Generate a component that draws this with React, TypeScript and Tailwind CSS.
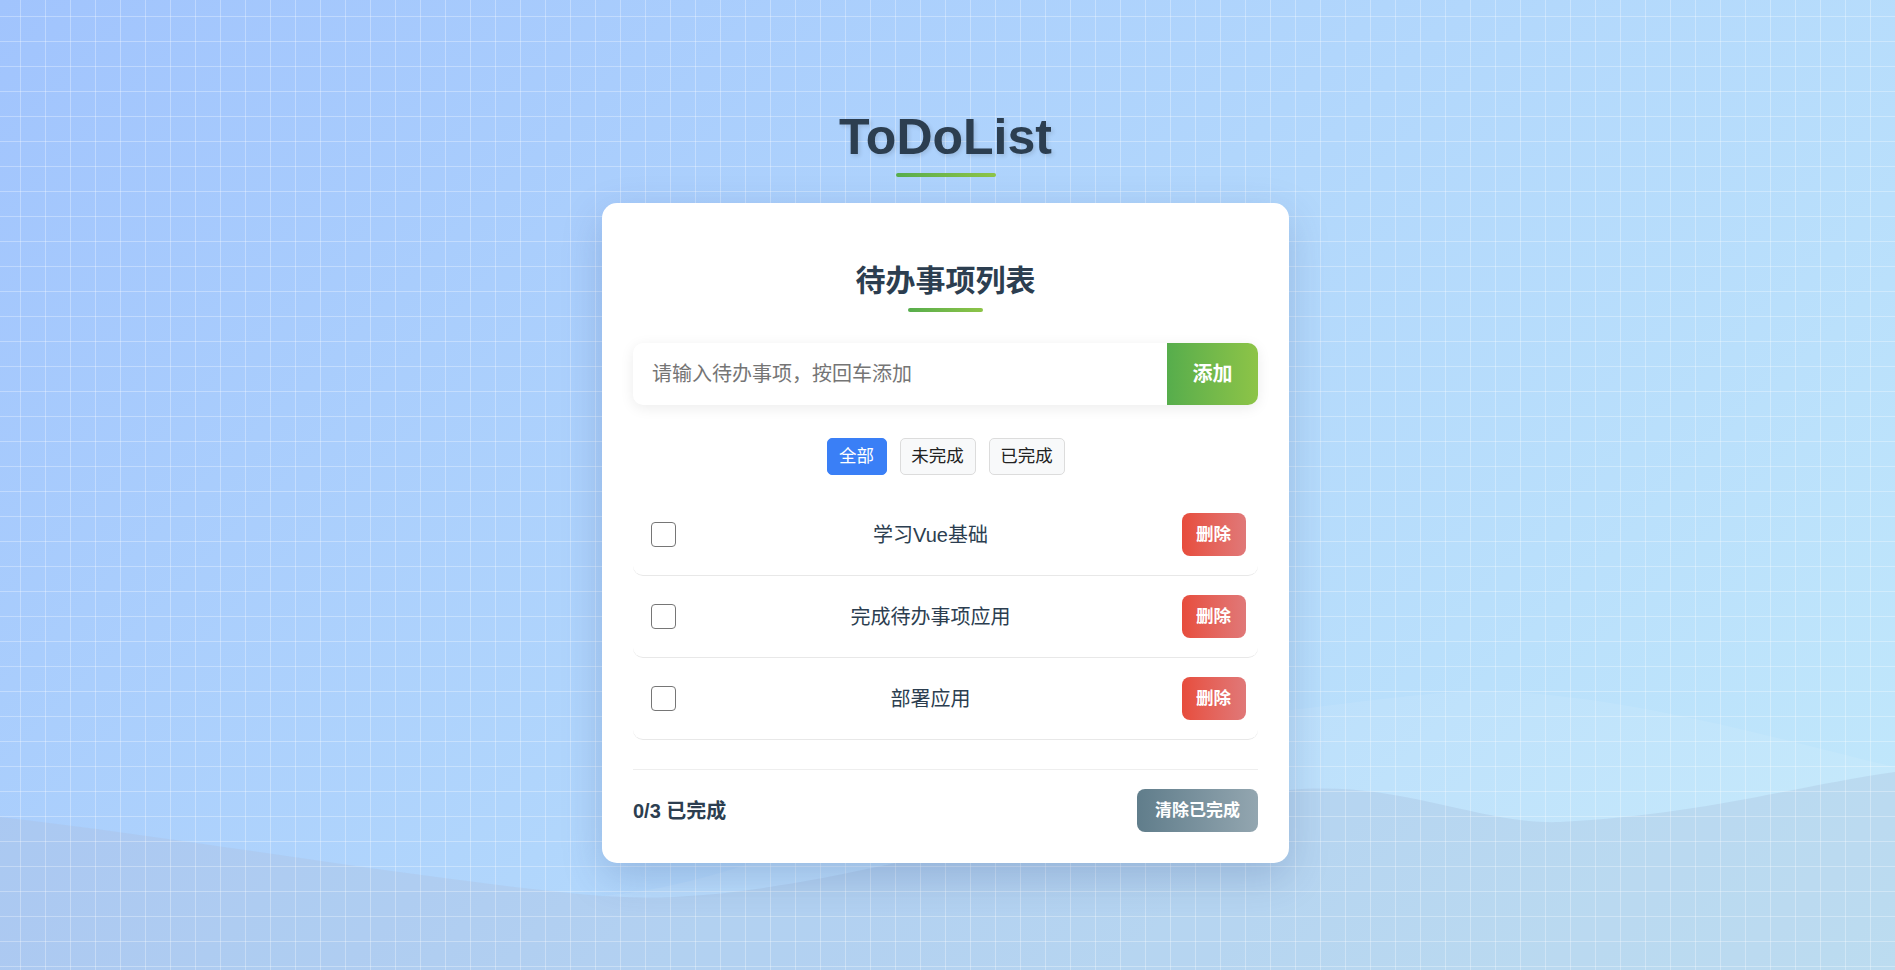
import React from "react";

const todos = ["学习Vue基础", "完成待办事项应用", "部署应用"];

function Waves() {
  return (
    <svg
      className="pointer-events-none absolute inset-0 h-full w-full"
      viewBox="0 0 1895 970"
      preserveAspectRatio="none"
    >
      <path
        d="M0,817 C200,840 420,880 602,896 C800,880 1000,730 1290,710 C1380,700 1450,688 1512,692 C1650,700 1800,745 1895,767 L1895,970 L0,970 Z"
        fill="rgba(255,255,255,0.08)"
      />
      <path
        d="M0,817 C200,840 420,880 602,896 C800,910 1000,820 1290,790 C1400,780 1480,825 1560,822 C1700,815 1800,785 1895,772 L1895,970 L0,970 Z"
        fill="rgba(150,165,200,0.2)"
      />
    </svg>
  );
}

export default function App() {
  return (
    <div className="relative h-screen w-full overflow-hidden bg-[linear-gradient(135deg,#a1c4fd_0%,#c2e9fb_100%)] font-['Liberation_Sans','Noto_Sans_CJK_SC',sans-serif]">
      <Waves />
      <div className="pointer-events-none absolute inset-0 bg-[linear-gradient(to_right,rgba(255,255,255,0.3)_1px,transparent_1px),linear-gradient(to_bottom,rgba(255,255,255,0.3)_1px,transparent_1px)] bg-[size:25px_25px] bg-[position:20px_16px]" />

      <div className="relative flex flex-col items-center pt-[108px] pr-[4px]">
        <h1 className="text-[50px] leading-[58px] font-bold text-[#2c3e50] [text-shadow:2px_2px_4px_rgba(0,0,0,0.12)]">
          ToDoList
        </h1>
        <div className="mt-[7px] h-[4px] w-[100px] rounded-full bg-linear-to-r from-[#56ad4c] to-[#8dc447]" />

        <div className="mt-[26px] w-[687px] rounded-[15px] bg-white px-[31px] pt-[31px] pb-[31px] shadow-[0_14px_40px_rgba(40,70,130,0.22)]">
          <h2 className="mt-[27px] text-center text-[30px] leading-[40px] font-bold text-[#2c3e50]">
            待办事项列表
          </h2>
          <div className="mx-auto mt-[7px] h-[4px] w-[75px] rounded-full bg-linear-to-r from-[#56ad4c] to-[#8dc447]" />

          <div className="mt-[31px] flex h-[62px] overflow-hidden rounded-[10px] bg-white shadow-[0_3px_14px_rgba(0,0,0,0.08)]">
            <input
              type="text"
              placeholder="请输入待办事项，按回车添加"
              className="min-w-0 flex-1 bg-transparent pl-[19px] text-[20px] text-[#2c3e50] outline-none placeholder:text-[#757575]"
            />
            <button className="flex w-[91px] items-center justify-center bg-linear-to-r from-[#56ad4c] to-[#8dc447] text-[20px] font-bold text-white">
              添加
            </button>
          </div>

          <div className="mt-[33px] flex justify-center gap-[13px]">
            <button className="flex h-[37px] w-[60px] items-center justify-center rounded-[5px] border border-[#3a7ff6] bg-[#3a7ff6] text-[17.5px] text-white">
              全部
            </button>
            <button className="flex h-[37px] w-[76px] items-center justify-center rounded-[5px] border border-[#dcdcdc] bg-[#f8f9fa] text-[17.5px] text-[#222]">
              未完成
            </button>
            <button className="flex h-[37px] w-[76px] items-center justify-center rounded-[5px] border border-[#dcdcdc] bg-[#f8f9fa] text-[17.5px] text-[#222]">
              已完成
            </button>
          </div>

          <ul className="mt-[19px]">
            {todos.map((t) => (
              <li
                key={t}
                className="flex h-[82px] items-center rounded-[10px] border-b border-[#e8e8e8] px-[12.5px]"
              >
                <span className="mr-[4px] ml-[5px] block h-[25px] w-[25px] rounded-[4px] border-[1.5px] border-[#767676] bg-white" />
                <span className="flex-1 text-center text-[20px] text-[#2c3e50]">{t}</span>
                <button className="flex h-[43px] w-[64px] items-center justify-center rounded-[8px] bg-linear-to-r from-[#e74c3c] to-[#e07878] text-[17.5px] font-bold text-white">
                  删除
                </button>
              </li>
            ))}
          </ul>

          <div className="mt-[29px] flex items-center justify-between border-t border-[#eeeeee] pt-[19px]">
            <span className="text-[20px] font-bold text-[#2c3e50]">0/3 已完成</span>
            <button className="flex h-[43px] w-[121px] items-center justify-center rounded-[8px] bg-linear-to-r from-[#607d8b] to-[#93a6b0] text-[17px] font-bold text-white">
              清除已完成
            </button>
          </div>
        </div>
      </div>
    </div>
  );
}
